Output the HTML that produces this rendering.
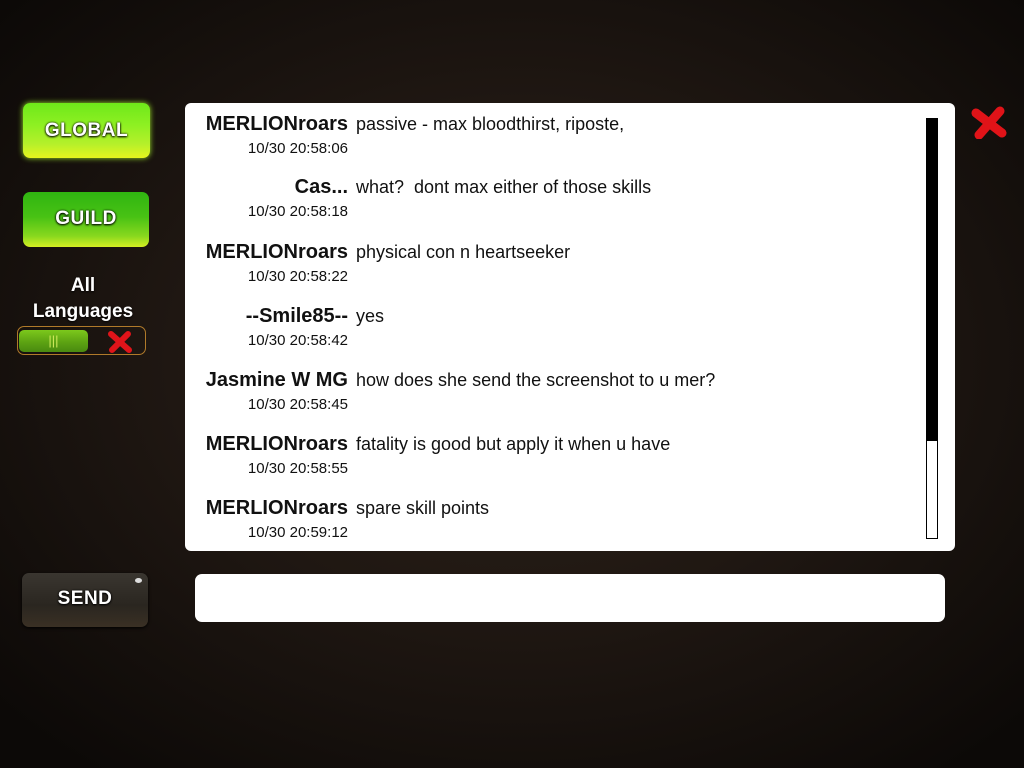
<!DOCTYPE html>
<html><head><style>
body{margin:0;width:1024px;height:768px;overflow:hidden;font-family:"Liberation Sans",sans-serif;
background:radial-gradient(ellipse 700px 520px at 520px 360px,#2e2319 0%,#1f1712 50%,#0c0907 100%);position:relative}
.btn{position:absolute;border-radius:7px;color:#fff;font-weight:bold;font-size:19px;text-align:center;text-shadow:0 1px 2px #000,0 0 2px #000;letter-spacing:0.5px}
.g1{left:23px;top:103px;width:127px;height:55px;line-height:55px;background:linear-gradient(#6ee81a 0%,#8ef022 40%,#b6f02a 75%,#e6f51e 100%);box-shadow:0 0 6px #9fe82a}
.g2{left:23px;top:192px;width:126px;height:55px;line-height:54px;background:linear-gradient(#2fb511 0%,#48c214 45%,#88d81e 80%,#d5ee22 100%)}
.send{left:22px;top:573px;width:126px;height:54px;line-height:52px;background:linear-gradient(#3a3630,#2a2620 60%,#3a3024);box-shadow:0 1px 3px #000}
.panel{position:absolute;left:185px;top:103px;width:770px;height:448px;background:#fff;border-radius:6px}
.msg{position:absolute;left:0;width:560px;color:#111}
.n{position:absolute;right:calc(560px - 163px);font-weight:bold;font-size:20px;white-space:nowrap;top:0}
.t{position:absolute;left:171px;font-size:18px;white-space:nowrap;top:1px}
.d{position:absolute;right:calc(560px - 163px);font-size:15px;top:27px;white-space:nowrap}
.sb{position:absolute;left:741px;top:15px;width:10px;height:419px;border:1px solid #000;background:linear-gradient(#000 0,#000 322px,#fff 322px)}
.inp{position:absolute;left:195px;top:574px;width:750px;height:48px;background:#fff;border-radius:7px}
</style></head><body>
<div class="btn g1">GLOBAL</div>
<div class="btn g2">GUILD</div>
<div style="position:absolute;left:20px;top:273px;width:126px;text-align:center;color:#fff;font-weight:bold;font-size:19px;line-height:26px;text-shadow:0 1px 2px #000">All<br>Languages</div>
<div style="position:absolute;left:17px;top:326px;width:129px;height:29px;border:1px solid #b07a2a;border-radius:7px;box-sizing:border-box"></div>
<div style="position:absolute;left:19px;top:330px;width:69px;height:22px;border-radius:5px;background:linear-gradient(#7cc81c,#5aa012 60%,#4a8a10);color:#cde85a;font-size:13px;text-align:center;line-height:22px">|||</div>
<svg style="position:absolute;left:108px;top:331px" width="24" height="22"><path d="M3 3 L21 19 M20 3 L4 19" stroke="#e0141a" stroke-width="6" stroke-linecap="round"/></svg>
<div class="btn send">SEND</div>
<div style="position:absolute;left:135px;top:578px;width:7px;height:5px;border-radius:50%;background:#ddd"></div>
<svg style="position:absolute;left:970px;top:105px" width="38" height="34"><path d="M6 8 L32 28 M30 6 L9 30" stroke="#e01318" stroke-width="9" stroke-linecap="round"/></svg>
<div class="panel">
<div class="msg" style="top:10px"><span class="n">MERLIONroars</span><span class="t">passive - max bloodthirst, riposte,</span><span class="d">10/30 20:58:06</span></div>
<div class="msg" style="top:73px"><span class="n">Cas...</span><span class="t">what?&nbsp; dont max either of those skills</span><span class="d">10/30 20:58:18</span></div>
<div class="msg" style="top:138px"><span class="n">MERLIONroars</span><span class="t">physical con n heartseeker</span><span class="d">10/30 20:58:22</span></div>
<div class="msg" style="top:202px"><span class="n">--Smile85--</span><span class="t">yes</span><span class="d">10/30 20:58:42</span></div>
<div class="msg" style="top:266px"><span class="n">Jasmine W MG</span><span class="t">how does she send the screenshot to u mer?</span><span class="d">10/30 20:58:45</span></div>
<div class="msg" style="top:330px"><span class="n">MERLIONroars</span><span class="t">fatality is good but apply it when u have</span><span class="d">10/30 20:58:55</span></div>
<div class="msg" style="top:394px"><span class="n">MERLIONroars</span><span class="t">spare skill points</span><span class="d">10/30 20:59:12</span></div>
<div class="sb"></div>
</div>
<div class="inp"></div>
</body></html>
